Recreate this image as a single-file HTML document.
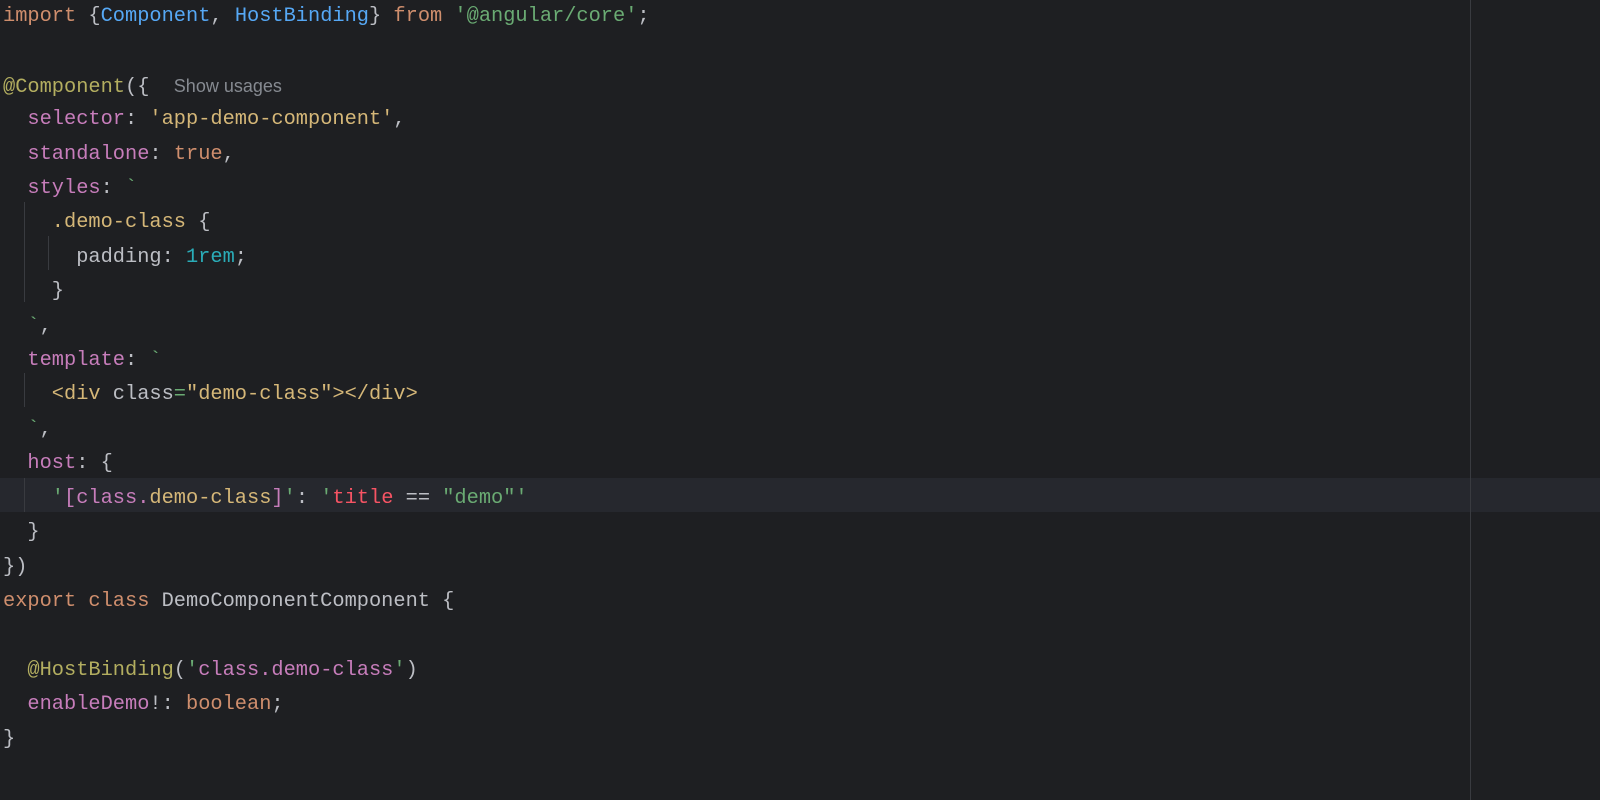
<!DOCTYPE html>
<html><head><style>
html,body{margin:0;padding:0;background:#1e1f22;width:1600px;height:800px;overflow:hidden}
.code{position:absolute;left:3px;top:2px;font-family:"Liberation Mono",monospace;font-size:20.33px;color:#bcbec4}
.l{height:34.42px;line-height:30px;white-space:pre}
.k{color:#cf8e6d}.b{color:#56a8f5}.s{color:#6aab73}.p{color:#c77dbb}.y{color:#d5b778}.a{color:#b3ae60}.n{color:#2aacb8}.r{color:#f75464}
.hint{font-family:"Liberation Sans",sans-serif;font-size:18px;color:#868a91}
.hl{position:absolute;left:0;top:478px;width:1600px;height:34px;background:#26282e}
.g{position:absolute;width:1px;background:#393b40}
.rm{position:absolute;left:1470px;top:0;width:1px;height:800px;background:#393b40}
</style></head><body>
<div class="hl"></div>
<div class="rm"></div>
<div class="g" style="left:24px;top:202px;height:100px"></div>
<div class="g" style="left:48px;top:236px;height:34px"></div>
<div class="g" style="left:24px;top:373px;height:34px"></div>
<div class="g" style="left:24px;top:478px;height:34px"></div>
<div class="code"><div class="l"><span class="k">import</span> {<span class="b">Component</span>, <span class="b">HostBinding</span>} <span class="k">from</span> <span class="s">'@angular/core'</span>;</div><div class="l"> </div><div class="l"><span class="a">@Component</span>({  <span class="hint">Show usages</span></div><div class="l">  <span class="p">selector</span>: <span class="y">'app-demo-component'</span>,</div><div class="l">  <span class="p">standalone</span>: <span class="k">true</span>,</div><div class="l">  <span class="p">styles</span>: <span class="s">`</span></div><div class="l">    <span class="y">.demo-class</span> {</div><div class="l">      padding: <span class="n">1rem</span>;</div><div class="l">    }</div><div class="l">  <span class="s">`</span>,</div><div class="l">  <span class="p">template</span>: <span class="s">`</span></div><div class="l">    <span class="y">&lt;div</span> class<span class="s">=</span><span class="y">"demo-class"</span><span class="y">&gt;&lt;/div&gt;</span></div><div class="l">  <span class="s">`</span>,</div><div class="l">  <span class="p">host</span>: {</div><div class="l">    <span class="s">'</span><span class="p">[class.</span><span class="y">demo-class</span><span class="p">]</span><span class="s">'</span>: <span class="s">'</span><span class="r">title</span> == <span class="s">"demo"</span><span class="s">'</span></div><div class="l">  }</div><div class="l">})</div><div class="l"><span class="k">export class</span> DemoComponentComponent {</div><div class="l"> </div><div class="l">  <span class="a">@HostBinding</span>(<span class="s">'</span><span class="p">class.demo-class</span><span class="s">'</span>)</div><div class="l">  <span class="p">enableDemo</span>!: <span class="k">boolean</span>;</div><div class="l">}</div></div>
</body></html>
